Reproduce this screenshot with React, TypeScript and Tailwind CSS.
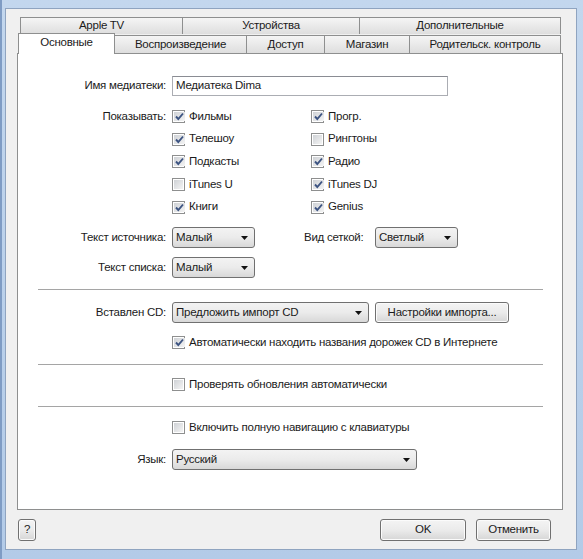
import React from "react";

const FONT = { fontFamily: '"Liberation Sans", Arial, sans-serif' };

const BACK_TABS = [
	{ label: "Apple TV", w: "w-[162px]" },
	{ label: "Устройства", w: "w-[177px]" },
	{ label: "Дополнительные", w: "w-[202px]" },
];

const FRONT_TABS = [
	{ label: "Воспроизведение", w: "w-[132px]" },
	{ label: "Доступ", w: "w-[78px]" },
	{ label: "Магазин", w: "w-[85px]" },
	{ label: "Родительск. контроль", w: "w-[151px]" },
];

const SHOW_LEFT = [
	{ label: "Фильмы", on: true },
	{ label: "Телешоу", on: true },
	{ label: "Подкасты", on: true },
	{ label: "iTunes U", on: false },
	{ label: "Книги", on: true },
];

const SHOW_RIGHT = [
	{ label: "Прогр.", on: true },
	{ label: "Рингтоны", on: false },
	{ label: "Радио", on: true },
	{ label: "iTunes DJ", on: true },
	{ label: "Genius", on: true },
];

function Check({ on, label }: { on: boolean; label: string }) {
	return (
		<div className="flex items-center gap-[4px] h-[13px]">
			<span className="w-[13px] h-[13px] border border-[#8e8f8f] bg-white p-px flex shrink-0">
				<span className="flex-1 bg-gradient-to-br from-[#cfd2d6] to-[#f4f4f4] flex items-center justify-center">
					{on && (
						<svg width="11" height="11" viewBox="0 0 11 11">
							<path d="M2 5.5 L4.3 8 L9 2.5" fill="none" stroke="#3d5482" strokeWidth="1.9" />
						</svg>
					)}
				</span>
			</span>
			<span className="leading-none">{label}</span>
		</div>
	);
}

function Arrow() {
	return (
		<svg width="7" height="4" viewBox="0 0 7 4" className="shrink-0">
			<path d="M0 0 H7 L3.5 4 Z" fill="#111" />
		</svg>
	);
}

function Select({ value, w }: { value: string; w: string }) {
	return (
		<div
			className={`${w} h-[21px] rounded-[3px] border border-[#707070] bg-gradient-to-b from-[#f3f3f3] via-[#ebebeb] to-[#d8d8d8] flex items-center justify-between pl-[3px] pr-[6px]`}
		>
			<span>{value}</span>
			<Arrow />
		</div>
	);
}

function Button({ label, w, h = "h-[22px]" }: { label: string; w: string; h?: string }) {
	return (
		<div
			className={`${w} ${h} rounded-[3px] border border-[#707070] bg-gradient-to-b from-[#f4f4f4] via-[#ebebeb] to-[#d6d6d6] flex items-center justify-center shadow-[inset_0_0_0_1px_#fbfbfb]`}
		>
			{label}
		</div>
	);
}

function Row({ label, children, className = "" }: { label?: string; children: React.ReactNode; className?: string }) {
	return (
		<div className={`flex items-center gap-[6px] ${className}`}>
			<div className="w-[148px] text-right shrink-0">{label}</div>
			{children}
		</div>
	);
}

function Separator({ className }: { className: string }) {
	return <div className={`h-px bg-[#a5a5a5] ml-[20px] mr-[19px] ${className}`} />;
}

export default function App() {
	return (
		<div
			className="w-[583px] h-[559px] bg-gradient-to-b from-[#c3d7ee] to-[#b3cbe8] pt-[8px] pl-[3px] pr-[6px] pb-[9px] flex text-[11.5px] tracking-[-0.25px] text-[#1b1b1b] border-l-2 border-l-[#7f9cc4]"
			style={FONT}
		>
			<div className="flex-1 bg-[#f0f0f0] border border-[#8fa4c0] flex flex-col pt-[8px]">
				<div className="pl-[11px] pr-[13px] flex flex-col flex-1">
					{/* back tab row */}
					<div className="flex ml-[3px] h-[17px]">
						{BACK_TABS.map((t, i) => (
							<div
								key={i}
								className={`${t.w} border-t border-l border-[#8e8f8f] ${i === BACK_TABS.length - 1 ? "border-r" : ""} bg-gradient-to-b from-[#f5f5f5] to-[#dedede] flex items-center justify-center`}
							>
								{t.label}
							</div>
						))}
					</div>
					{/* front tab row */}
					<div className="flex items-end ml-[1px] h-[19px] relative z-10">
						<div className="w-[97px] h-[21px] mb-[-1px] bg-white border-t border-l border-r border-[#8e8f8f] flex items-center justify-center pb-[2px]">
							Основные
						</div>
						{FRONT_TABS.map((t, i) => (
							<div
								key={i}
								className={`${t.w} h-[18px] border-t border-r border-[#8e8f8f] bg-gradient-to-b from-[#f5f5f5] to-[#dedede] flex items-center justify-center`}
							>
								{t.label}
							</div>
						))}
					</div>

					{/* panel */}
					<div className="h-[457px] bg-white border border-[#8e8f8f] flex flex-col">
						<Row label="Имя медиатеки:" className="mt-[22px]">
							<div className="w-[276px] h-[20px] border border-[#abadb3] border-t-[#8a8c93] bg-white flex items-center px-[3px]">
								Медиатека Dima
							</div>
						</Row>

						<div className="flex gap-[6px] mt-[9px]">
							<div className="w-[148px] text-right shrink-0 h-[22.7px] flex items-center justify-end">Показывать:</div>
							<div className="w-[133px] flex flex-col">
								{SHOW_LEFT.map((c, i) => (
									<div key={i} className="h-[22.7px] flex items-center">
										<Check on={c.on} label={c.label} />
									</div>
								))}
							</div>
							<div className="flex flex-col">
								{SHOW_RIGHT.map((c, i) => (
									<div key={i} className="h-[22.7px] flex items-center">
										<Check on={c.on} label={c.label} />
									</div>
								))}
							</div>
						</div>

						<Row label="Текст источника:" className="mt-[9px]">
							<Select value="Малый" w="w-[83px]" />
							<div className="ml-[43px] w-[65px] shrink-0">Вид сеткой:</div>
							<Select value="Светлый" w="w-[83px]" />
						</Row>
						<Row label="Текст списка:" className="mt-[9px]">
							<Select value="Малый" w="w-[83px]" />
						</Row>

						<Separator className="mt-[11px]" />

						<Row label="Вставлен CD:" className="mt-[12px]">
							<Select value="Предложить импорт CD" w="w-[197px]" />
							<Button label="Настройки импорта..." w="w-[134px]" h="h-[21px]" />
						</Row>
						<Row className="mt-[13px]">
							<Check on={true} label="Автоматически находить названия дорожек CD в Интернете" />
						</Row>

						<Separator className="mt-[15px]" />

						<Row className="mt-[13px]">
							<Check on={false} label="Проверять обновления автоматически" />
						</Row>

						<Separator className="mt-[15px]" />

						<Row className="mt-[14px]">
							<Check on={false} label="Включить полную навигацию с клавиатуры" />
						</Row>
						<Row label="Язык:" className="mt-[15px]">
							<Select value="Русский" w="w-[245px]" />
						</Row>
					</div>
				</div>

				{/* bottom buttons */}
				<div className="h-[39px] flex items-start pt-[9px] pl-[12px] pr-[25px]">
					<Button label="?" w="w-[18px]" />
					<div className="flex-1" />
					<Button label="OK" w="w-[86px]" />
					<div className="w-[10px]" />
					<Button label="Отменить" w="w-[75px]" />
				</div>
			</div>
		</div>
	);
}
